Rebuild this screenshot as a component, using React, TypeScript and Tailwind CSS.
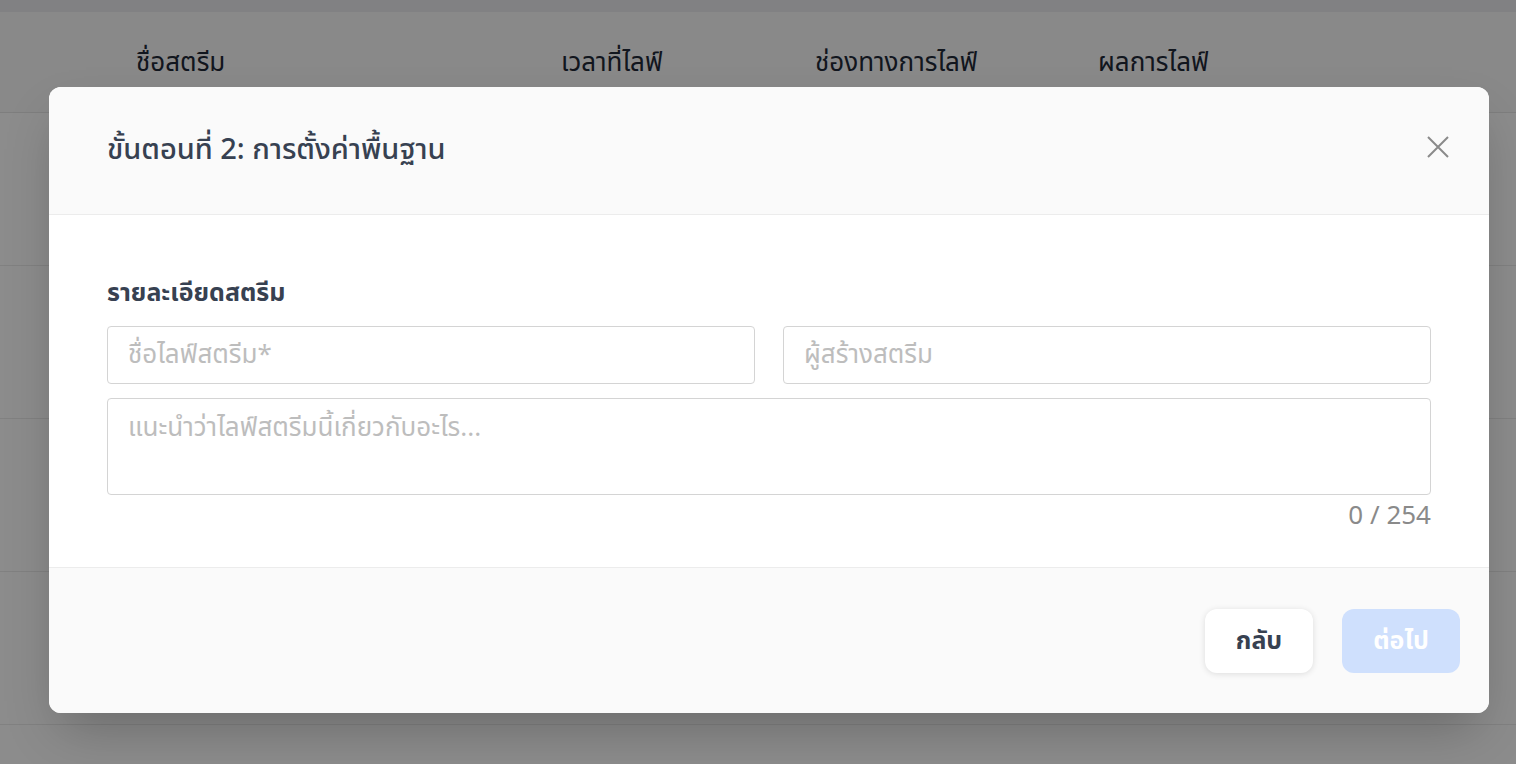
import React from "react";

const columns = [
  { label: "ชื่อสตรีม", w: "w-[425px]" },
  { label: "เวลาที่ไลฟ์", w: "w-[254px]" },
  { label: "ช่องทางการไลฟ์", w: "w-[283px]" },
  { label: "ผลการไลฟ์", w: "w-[300px]" },
];

const fieldCls =
  "h-[58px] rounded-[4px] border border-[#d4d4d4] px-[20px] text-[26px] text-[#374151] outline-none placeholder:text-[#bdbdbd]";

export default function App() {
  return (
    <div className="relative h-[764px] w-[1516px] overflow-hidden bg-white font-['Noto_Sans_Thai','Noto_Sans',sans-serif]">
      {/* page behind the modal */}
      <div className="h-[12px] bg-[#ececee]" />
      <div className="flex h-[101px] items-center border-b border-[#e5e5e5] bg-[#fafafa] pl-[136px] pt-[2px] text-[26px] text-[#1f2937]">
        {columns.map((c) => (
          <div key={c.label} className={c.w}>{c.label}</div>
        ))}
      </div>
      {[0, 1, 2, 3].map((i) => (
        <div key={i} className="h-[153px] border-b border-[#ebebeb]" />
      ))}

      {/* overlay */}
      <div className="absolute inset-0 bg-black/45 pl-[49px] pt-[87px]">
        <div className="flex h-[626px] w-[1440px] flex-col overflow-hidden rounded-[12px] bg-white shadow-2xl">
          <div className="flex h-[128px] items-center justify-between border-b border-[#ececec] bg-[#fafafa] pl-[58px] pr-[31px]">
            <h2 className="text-[29px] font-medium text-[#374151]">ขั้นตอนที่ 2: การตั้งค่าพื้นฐาน</h2>
            <button className="-mt-[8px] flex h-[40px] w-[40px] items-center justify-center text-[#8a8a8a]">
              <svg width="22" height="22" viewBox="0 0 22 22" fill="none" stroke="currentColor" strokeWidth="2">
                <path d="M1 1 L21 21 M21 1 L1 21" />
              </svg>
            </button>
          </div>

          <div className="flex h-[353px] flex-col border-b border-[#ececec] px-[58px] pt-[60px]">
            <div className="text-[25px] font-bold text-[#374151]">รายละเอียดสตรีม</div>
            <div className="mt-[13px] grid grid-cols-2 gap-[28px]">
              <input placeholder="ชื่อไลฟ์สตรีม*" className={fieldCls} />
              <input placeholder="ผู้สร้างสตรีม" className={fieldCls} />
            </div>
            <textarea
              placeholder="แนะนำว่าไลฟ์สตรีมนี้เกี่ยวกับอะไร..."
              className="mt-[14px] h-[97px] resize-none rounded-[4px] border border-[#d4d4d4] px-[20px] py-[10px] text-[26px] text-[#374151] outline-none placeholder:text-[#bdbdbd]"
            />
            <div className="mt-[2px] text-right text-[26px] text-[#8a8a8a]">0 / 254</div>
          </div>

          <div className="flex flex-1 items-center justify-end gap-[29px] bg-[#fafafa] pr-[29px]">
            <button className="h-[64px] w-[108px] rounded-[12px] bg-white pt-[2px] text-[25px] font-bold text-[#374151] shadow-[0_1px_6px_rgba(0,0,0,0.12)]">
              กลับ
            </button>
            <button className="h-[64px] w-[118px] rounded-[12px] bg-[#cfe0fd] pt-[2px] text-[25px] font-bold text-white">
              ต่อไป
            </button>
          </div>
        </div>
      </div>
    </div>
  );
}
